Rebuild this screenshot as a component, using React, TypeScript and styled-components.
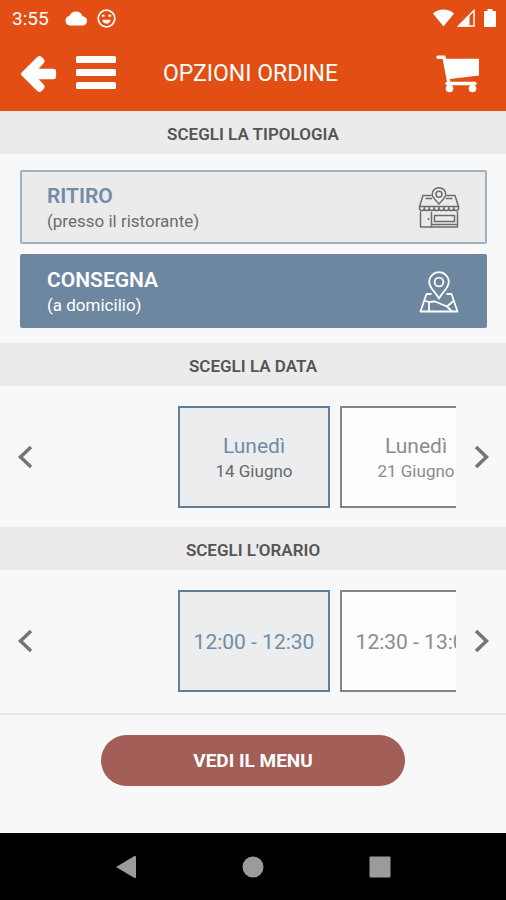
import React, { useState } from "react";
import styled, { createGlobalStyle } from "styled-components";

const color = {
  orange: "#e24e13",
  page: "#f8f8f8",
  band: "#ebebeb",
  blue: "#6d87a0",
  blueText: "#718ca8",
  border: "#5f7f9c",
  text: "#555555",
  muted: "#8c8c8c",
  button: "#a35e57",
};

const GlobalStyle = createGlobalStyle`
  *, *::before, *::after { box-sizing: border-box; }
  body {
    margin: 0;
    background: ${color.page};
    font-family: Roboto, "Liberation Sans", sans-serif;
    color: ${color.text};
  }
  button {
    font: inherit;
    color: inherit;
    background: none;
    border: 0;
    padding: 0;
    cursor: pointer;
  }
  h1, h2 { margin: 0; }
  svg { display: block; flex: none; }
`;

const Screen = styled.div`
  display: flex;
  flex-direction: column;
  min-height: 100vh;
`;

const StatusBar = styled.div`
  display: flex;
  align-items: center;
  justify-content: space-between;
  height: 36px;
  padding: 0 10px 0 12px;
  background: ${color.orange};
  color: #fff;
  font-size: 19px;
`;

const StatusGroup = styled.div<{ $gap: number }>`
  display: flex;
  align-items: center;
  gap: ${(p) => p.$gap}px;
`;

const Clock = styled.span`
  margin-right: 6px;
`;

const Header = styled.header`
  display: grid;
  grid-template-columns: 1fr auto 1fr;
  align-items: center;
  height: 75px;
  padding: 0 26px 0 21px;
  background: ${color.orange};
  color: #fff;
`;

const HeaderSide = styled.div<{ $end?: boolean }>`
  display: flex;
  align-items: center;
  gap: 19px;
  justify-content: ${(p) => (p.$end ? "flex-end" : "flex-start")};
`;

const Title = styled.h1`
  font-size: 23px;
  font-weight: 400;
  line-height: 28px;
`;

const Main = styled.main`
  flex: 1;
`;

const SectionTitle = styled.h2`
  display: flex;
  align-items: center;
  justify-content: center;
  height: 43px;
  padding-top: 2px;
  background: ${color.band};
  font-size: 17px;
  font-weight: 600;
`;

const OptionList = styled.div`
  display: flex;
  flex-direction: column;
  gap: 10px;
  padding: 16px 19px 15px 20px;
`;

const Option = styled.button<{ $selected: boolean }>`
  display: flex;
  align-items: center;
  justify-content: space-between;
  height: 74px;
  padding: 1px 25px 0 25px;
  border: 2px solid ${(p) => (p.$selected ? color.blue : "#9fb0c0")};
  border-radius: 2px;
  background: ${(p) => (p.$selected ? color.blue : color.band)};
  color: ${(p) => (p.$selected ? "#fff" : "#6c6c6c")};
  text-align: left;
`;

const OptionText = styled.span`
  display: flex;
  flex-direction: column;
`;

const OptionName = styled.span<{ $selected: boolean }>`
  color: ${(p) => (p.$selected ? "#fff" : color.blueText)};
  font-size: 21px;
  font-weight: 600;
  line-height: 26px;
`;

const OptionHint = styled.span`
  font-size: 17px;
  line-height: 24px;
`;

const Carousel = styled.div`
  display: flex;
  align-items: center;
  height: 141px;
`;

const Arrow = styled.button`
  display: flex;
  align-items: center;
  justify-content: center;
  flex: none;
  width: 50px;
  height: 60px;
  color: #757575;
`;

const Viewport = styled.div`
  flex: 1;
  min-width: 0;
  overflow: hidden;
`;

const Track = styled.div`
  display: flex;
  gap: 10px;
  padding-left: calc(50% - 75px);
`;

const Tile = styled.button<{ $selected: boolean }>`
  display: flex;
  flex: none;
  flex-direction: column;
  align-items: center;
  justify-content: center;
  width: 152px;
  height: 102px;
  padding-top: 3px;
  border: 2px solid ${(p) => (p.$selected ? color.border : "#858585")};
  background: ${(p) => (p.$selected ? "#ebedee" : "#fdfdfd")};
  color: ${(p) => (p.$selected ? color.blueText : color.muted)};
  font-size: 21px;
  line-height: 26px;
  white-space: nowrap;
`;

const TileHint = styled.span<{ $selected: boolean }>`
  color: ${(p) => (p.$selected ? "#686868" : color.muted)};
  font-size: 17px;
  line-height: 24px;
`;

const Footer = styled.footer`
  display: flex;
  justify-content: center;
  margin-top: 2px;
  padding: 20px 0;
  border-top: 2px solid #e6e7e8;
`;

const MenuButton = styled.button`
  width: 60%;
  height: 51px;
  border-radius: 26px;
  background: ${color.button};
  color: #fff;
  font-size: 19px;
  font-weight: 700;
`;

const NavBar = styled.nav`
  display: flex;
  align-items: center;
  justify-content: center;
  gap: 103px;
  height: 67px;
  background: #000;
  color: #9b9b9b;
`;

const CloudIcon = () => (
  <svg width="22" height="16" viewBox="0 0 22 16" fill="currentColor" aria-hidden>
    <path d="M5 15.500a4.800 4.800 0 0 1-.6-9.500A7 7 0 0 1 17.600 6.300 4.600 4.600 0 0 1 17.300 15.500Z" />
  </svg>
);

const SmileIcon = () => (
  <svg width="19" height="19" viewBox="0 0 19 19" fill="none" stroke="currentColor" aria-hidden>
    <circle cx="9.500" cy="9.500" r="8.300" strokeWidth="1.700" />
    <path d="M4.800 6.800h2.800M11.400 6.800h2.800" strokeWidth="2" />
    <path d="M5.300 10.700h8.400c-.5 2.700-2.200 3.900-4.200 3.900s-3.700-1.200-4.200-3.900Z" fill="currentColor" stroke="none" />
  </svg>
);

const WifiIcon = () => (
  <svg width="21" height="18" viewBox="0 0 21 18" fill="currentColor" aria-hidden>
    <path d="M0 4.600C6 -1 15 -1 21 4.600L10.500 17.500Z" />
  </svg>
);

const SignalIcon = () => (
  <svg width="18" height="18" viewBox="0 0 18 18" aria-hidden>
    <path d="M1.500 17 17 1.500V17Z" fill="none" stroke="currentColor" strokeWidth="1.500" />
    <path d="M1 17.500 12.500 6V17.500Z" fill="currentColor" />
  </svg>
);

const BatteryIcon = () => (
  <svg width="12" height="18" viewBox="0 0 12 18" fill="currentColor" aria-hidden>
    <path d="M3.500 0h5v2H11q1 0 1 1V17q0 1-1 1H1q-1 0-1-1V3q0-1 1-1h2.500Z" />
  </svg>
);

const BackIcon = () => (
  <svg width="36" height="38" viewBox="0 0 36 38" fill="currentColor" aria-hidden>
    <path d="M.6 17.600 16.500 1.700q2.100-1.600 4.100.2l2.100 2.100q1.700 2 .1 4.100L17.700 13.800H32.500q2.600 0 2.600 2.600v5.200q0 2.600-2.600 2.600H17.700l5.100 5.500q1.700 2.300-.1 4.300l-2.100 2.100q-2 1.700-4.100.1L.6 20.400Q-.6 19 .6 17.600Z" />
  </svg>
);

const BurgerIcon = () => (
  <svg width="40" height="38" viewBox="0 0 40 38" fill="currentColor" aria-hidden>
    <rect y="1" width="40" height="7" rx="1.500" />
    <rect y="14" width="40" height="7" rx="1.500" />
    <rect y="27" width="40" height="7" rx="1.500" />
  </svg>
);

const CartIcon = () => (
  <svg width="44" height="38" viewBox="0 0 44 38" fill="currentColor" aria-hidden>
    <path d="M8 3.800H43V20.500L12 24.300Z" />
    <path d="M2 2.200H8L13 28.500M11 28.500H39" fill="none" stroke="currentColor" strokeWidth="3.400" strokeLinecap="round" strokeLinejoin="round" />
    <path d="M13.500 28v6M36.500 28v6" stroke="currentColor" strokeWidth="3" />
    <circle cx="13.500" cy="33.500" r="3.800" />
    <circle cx="36.500" cy="33.500" r="3.800" />
  </svg>
);

const ShopIcon = () => (
  <svg width="42" height="42" viewBox="0 0 42 42" fill="none" stroke="currentColor" strokeWidth="1.500" strokeLinejoin="round" aria-hidden>
    <path d="M13.500 8.500H5L1.500 19.500H40.500L37 8.500H28.500M14 11.500H7.500M28 11.500H34.500" />
    <path d="M21 17C18.500 13.500 14.200 11 14.200 7.200a6.800 6.500 0 0 1 13.600 0c0 3.800-4.300 6.300-6.800 9.800Z" />
    <circle cx="21" cy="7.200" r="3" />
    <path d="M1.500 19.500v2.500q2.500 3.500 4.900 0q2.400 3.500 4.900 0q2.400 3.500 4.900 0q2.400 3.500 4.800 0q2.400 3.500 4.900 0q2.400 3.500 4.900 0q2.400 3.500 4.900 0q2.400 3.500 4.800 0v-2.500" />
    <path d="M6.400 19.500V22M11.300 19.500V22M16.200 19.500V22M21 19.500V22M25.900 19.500V22M30.800 19.500V22M35.700 19.500V22" />
    <path d="M2.500 24.500V40H39.500V24.500M13.500 25V40M16.500 28.500H36.500V34.500H16.500ZM14 37.500H39M10.500 31v2" />
  </svg>
);

const MapIcon = () => (
  <svg width="42" height="42" viewBox="0 0 42 42" fill="none" stroke="currentColor" strokeWidth="1.800" strokeLinejoin="round" aria-hidden>
    <path d="M21 27.500C17.500 21 11.200 17 11.200 11a9.800 9.800 0 0 1 19.600 0c0 6-6.300 10-9.800 16.500Z" />
    <circle cx="21" cy="11" r="4.400" />
    <path d="M13.500 23H8.500L2.500 40.500H39.500L33.500 23H28.500" />
    <path d="M6.500 29.500 11 31 17 30.500 29 35.500 36 29.500M11 31V40.500M29 35.500 34 40.500" />
  </svg>
);

const Chevron = ({ right }: { right?: boolean }) => (
  <svg width="16" height="24" viewBox="0 0 16 24" fill="none" stroke="currentColor" strokeWidth="3.500" aria-hidden>
    <path d={right ? "M3 2 13.500 12 3 22" : "M14 2 3.500 12 14 22"} />
  </svg>
);

const modes = [
  { id: "ritiro", name: "RITIRO", hint: "(presso il ristorante)", icon: <ShopIcon /> },
  { id: "consegna", name: "CONSEGNA", hint: "(a domicilio)", icon: <MapIcon /> },
];

const dates = [
  { label: "Lunedì", hint: "14 Giugno" },
  { label: "Lunedì", hint: "21 Giugno" },
];

const times = [{ label: "12:00 - 12:30" }, { label: "12:30 - 13:00" }];

type Item = { label: string; hint?: string };

function Picker({ items, name }: { items: Item[]; name: string }) {
  const [selected, setSelected] = useState(0);
  const last = items.length - 1;
  return (
    <Carousel role="group" aria-label={name}>
      <Arrow type="button" aria-label="Precedente" onClick={() => setSelected(Math.max(0, selected - 1))}>
        <Chevron />
      </Arrow>
      <Viewport>
        <Track>
          {items.map((item, i) => (
            <Tile
              key={i}
              type="button"
              $selected={i === selected}
              aria-pressed={i === selected}
              onClick={() => setSelected(i)}
            >
              <span>{item.label}</span>
              {item.hint && <TileHint $selected={i === selected}>{item.hint}</TileHint>}
            </Tile>
          ))}
        </Track>
      </Viewport>
      <Arrow type="button" aria-label="Successivo" onClick={() => setSelected(Math.min(last, selected + 1))}>
        <Chevron right />
      </Arrow>
    </Carousel>
  );
}

export default function App() {
  const [mode, setMode] = useState("consegna");
  return (
    <Screen>
      <GlobalStyle />
      <StatusBar>
        <StatusGroup $gap={10}>
          <Clock>3:55</Clock>
          <CloudIcon />
          <SmileIcon />
        </StatusGroup>
        <StatusGroup $gap={3}>
          <WifiIcon />
          <StatusGroup $gap={9}>
            <SignalIcon />
            <BatteryIcon />
          </StatusGroup>
        </StatusGroup>
      </StatusBar>
      <Header>
        <HeaderSide>
          <button type="button" aria-label="Indietro">
            <BackIcon />
          </button>
          <button type="button" aria-label="Menu">
            <BurgerIcon />
          </button>
        </HeaderSide>
        <Title>OPZIONI ORDINE</Title>
        <HeaderSide $end>
          <button type="button" aria-label="Carrello">
            <CartIcon />
          </button>
        </HeaderSide>
      </Header>
      <Main>
        <SectionTitle>SCEGLI LA TIPOLOGIA</SectionTitle>
        <OptionList>
          {modes.map((m) => (
            <Option
              key={m.id}
              type="button"
              $selected={m.id === mode}
              aria-pressed={m.id === mode}
              onClick={() => setMode(m.id)}
            >
              <OptionText>
                <OptionName $selected={m.id === mode}>{m.name}</OptionName>
                <OptionHint>{m.hint}</OptionHint>
              </OptionText>
              {m.icon}
            </Option>
          ))}
        </OptionList>
        <SectionTitle>SCEGLI LA DATA</SectionTitle>
        <Picker items={dates} name="Data" />
        <SectionTitle>SCEGLI L'ORARIO</SectionTitle>
        <Picker items={times} name="Orario" />
        <Footer>
          <MenuButton type="button">VEDI IL MENU</MenuButton>
        </Footer>
      </Main>
      <NavBar>
        <button type="button" aria-label="Indietro (sistema)">
          <svg width="24" height="24" viewBox="0 0 24 24" fill="currentColor" aria-hidden>
            <path d="M2 12 20.500 1q1.500-.5 1.500 1V22q0 1.500-1.500 1Z" />
          </svg>
        </button>
        <button type="button" aria-label="Home">
          <svg width="24" height="24" viewBox="0 0 24 24" fill="currentColor" aria-hidden>
            <circle cx="12" cy="12" r="10.500" />
          </svg>
        </button>
        <button type="button" aria-label="App recenti">
          <svg width="24" height="24" viewBox="0 0 24 24" fill="currentColor" aria-hidden>
            <rect x="1.500" y="1.500" width="21" height="21" rx="1" />
          </svg>
        </button>
      </NavBar>
    </Screen>
  );
}
